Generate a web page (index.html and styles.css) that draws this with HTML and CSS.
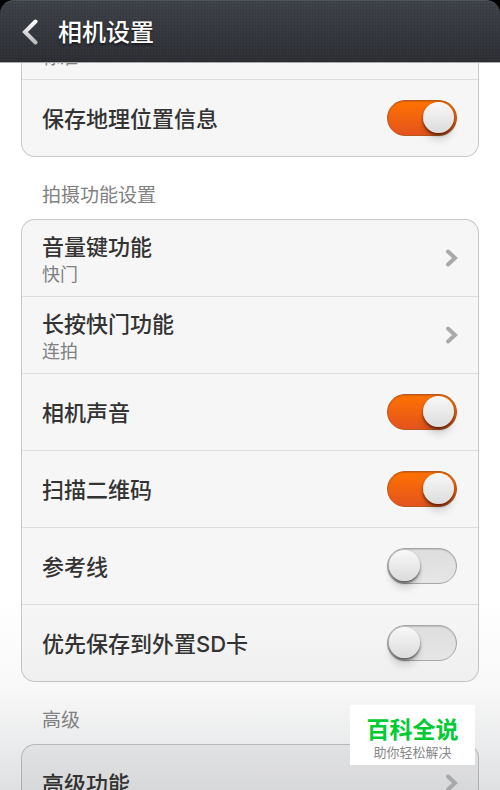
FILE: index.html
```
<!DOCTYPE html>
<html lang="zh-CN">
<head>
<meta charset="utf-8">
<meta name="viewport" content="width=device-width, initial-scale=1">
<title>相机设置</title>
<link rel="stylesheet" href="styles.css">
</head>
<body>
<header class="topbar">
  <button class="back" type="button" aria-label="返回">
    <svg width="18" height="26" viewBox="0 0 18 26"><defs><linearGradient id="arrow" x1="0" y1="0" x2="0" y2="1"><stop offset="0" stop-color="#fff"/><stop offset="1" stop-color="#bbb"/></linearGradient></defs><path d="M15.500 2.500 5 13l10.500 10.500" fill="none" stroke="url(#arrow)" stroke-width="4" stroke-linecap="round"/></svg>
  </button>
  <h1 class="title">相机设置</h1>
</header>
<main class="scroller">
  <div class="content">
    <section class="card">
      <a class="row" href="#quality"><span class="text"><span class="label">照片质量</span><span class="value">标准</span></span></a>
      <label class="row"><span class="label">保存地理位置信息</span><input class="switch" type="checkbox" checked></label>
    </section>
    <h2 class="heading">拍摄功能设置</h2>
    <section class="card">
      <a class="row" href="#volume"><span class="text"><span class="label">音量键功能</span><span class="value">快门</span></span><svg class="chevron" width="12" height="18" viewBox="0 0 12 18"><path d="M3 2.500 10 9l-7 6.500"/></svg></a>
      <a class="row" href="#shutter"><span class="text"><span class="label">长按快门功能</span><span class="value">连拍</span></span><svg class="chevron" width="12" height="18" viewBox="0 0 12 18"><path d="M3 2.500 10 9l-7 6.500"/></svg></a>
      <label class="row"><span class="label">相机声音</span><input class="switch" type="checkbox" checked></label>
      <label class="row"><span class="label">扫描二维码</span><input class="switch" type="checkbox" checked></label>
      <label class="row"><span class="label">参考线</span><input class="switch" type="checkbox"></label>
      <label class="row"><span class="label">优先保存到外置SD卡</span><input class="switch" type="checkbox"></label>
    </section>
    <h2 class="heading">高级</h2>
    <section class="card">
      <a class="row" href="#advanced"><span class="label">高级功能</span><svg class="chevron" width="12" height="18" viewBox="0 0 12 18"><path d="M3 2.500 10 9l-7 6.500"/></svg></a>
    </section>
  </div>
</main>
<aside class="badge"><strong class="badge-name">百科全说</strong><span class="badge-note">助你轻松解决</span></aside>
</body>
</html>
```
FILE: styles.css
```
* { box-sizing: border-box; }
html { background: #000; }
body {
  margin: 0;
  height: 100vh;
  display: flex;
  flex-direction: column;
  overflow: hidden;
  position: relative;
  font-family: Inter, "Noto Sans CJK SC", sans-serif;
  color: #333;
}
.topbar {
  flex: none;
  height: 62px;
  display: flex;
  align-items: center;
  gap: 8px;
  padding: 0 20px;
  border-top: 1px solid #50545a;
  border-radius: 14px 14px 0 0;
  background:
    repeating-linear-gradient(90deg, rgba(0, 0, 0, .06) 0 1px, transparent 1px 3px),
    repeating-linear-gradient(rgba(0, 0, 0, .06) 0 1px, transparent 1px 3px),
    linear-gradient(#40444b, #2e3036);
}
.back {
  display: flex;
  width: 30px;
  padding: 0;
  border: 0;
  background: none;
}
.title {
  margin: 0;
  padding-top: 2px;
  font-size: 24px;
  line-height: 32px;
  font-weight: 500;
  color: #fff;
  text-shadow: 0 2px 2px rgba(0, 0, 0, .5);
}
.scroller {
  flex: 1;
  min-height: 0;
  overflow-y: auto;
  scrollbar-width: none;
  border-top: 1px solid #a9a9ab;
  background: linear-gradient(#fff 0, #fff 74%, #f8f8f8 86%, #eaebec 94%, #dfe0e2 100%);
}
.content {
  margin-top: -61px;
  padding: 0 21px;
}
.card {
  border: 1px solid rgba(0, 0, 0, .22);
  border-radius: 14px;
  background: rgba(0, 0, 0, .035);
  background-clip: padding-box;
}
.row {
  height: 77px;
  display: flex;
  align-items: center;
  justify-content: space-between;
  padding: 0 21px 0 20px;
  border-bottom: 1px solid #dcdcdc;
  color: inherit;
  text-decoration: none;
}
.row:last-child {
  height: 76px;
  border-bottom: 0;
}
.text {
  display: flex;
  flex-direction: column;
  padding-top: 4px;
}
.label {
  padding-top: 2px;
  font-size: 22px;
  line-height: 28px;
  font-weight: 500;
}
.value {
  font-size: 18px;
  line-height: 28px;
  color: #808080;
}
.heading {
  margin: 0;
  padding: 16px 21px 0;
  font-size: 19px;
  line-height: 46px;
  font-weight: 400;
  color: #808080;
}
.chevron {
  fill: none;
  stroke: #a9a9a9;
  stroke-width: 4;
  stroke-linecap: round;
  overflow: visible;
}
.switch {
  appearance: none;
  flex: none;
  width: 70px;
  height: 36px;
  margin: 0;
  padding: 1px;
  display: flex;
  border: 1px solid #aaa6a4;
  border-radius: 18px;
  background: linear-gradient(#dedede, #e6e6e6);
  box-shadow: inset 0 1px 1px rgba(0, 0, 0, .15);
}
.switch::before {
  content: "";
  width: 31px;
  height: 31px;
  border-radius: 50%;
  background: linear-gradient(#f8f8f8, #dcdcdc);
  box-shadow: 0 2px 3px rgba(0, 0, 0, .6), 0 9px 7px -1px rgba(0, 0, 0, .12);
}
.switch:checked {
  justify-content: flex-end;
  padding-right: 2px;
  border-color: #b9581b;
  background: linear-gradient(#ff7200, #e4531e);
}
.badge {
  position: absolute;
  right: 25px;
  bottom: 25px;
  width: 125px;
  height: 60px;
  display: flex;
  flex-direction: column;
  align-items: center;
  padding-top: 11px;
  background: #fff;
}
.badge-name {
  font-size: 23px;
  line-height: 28px;
  font-weight: 700;
  color: #00cb32;
}
.badge-note {
  font-size: 13px;
  line-height: 16px;
  color: #888;
}
```
